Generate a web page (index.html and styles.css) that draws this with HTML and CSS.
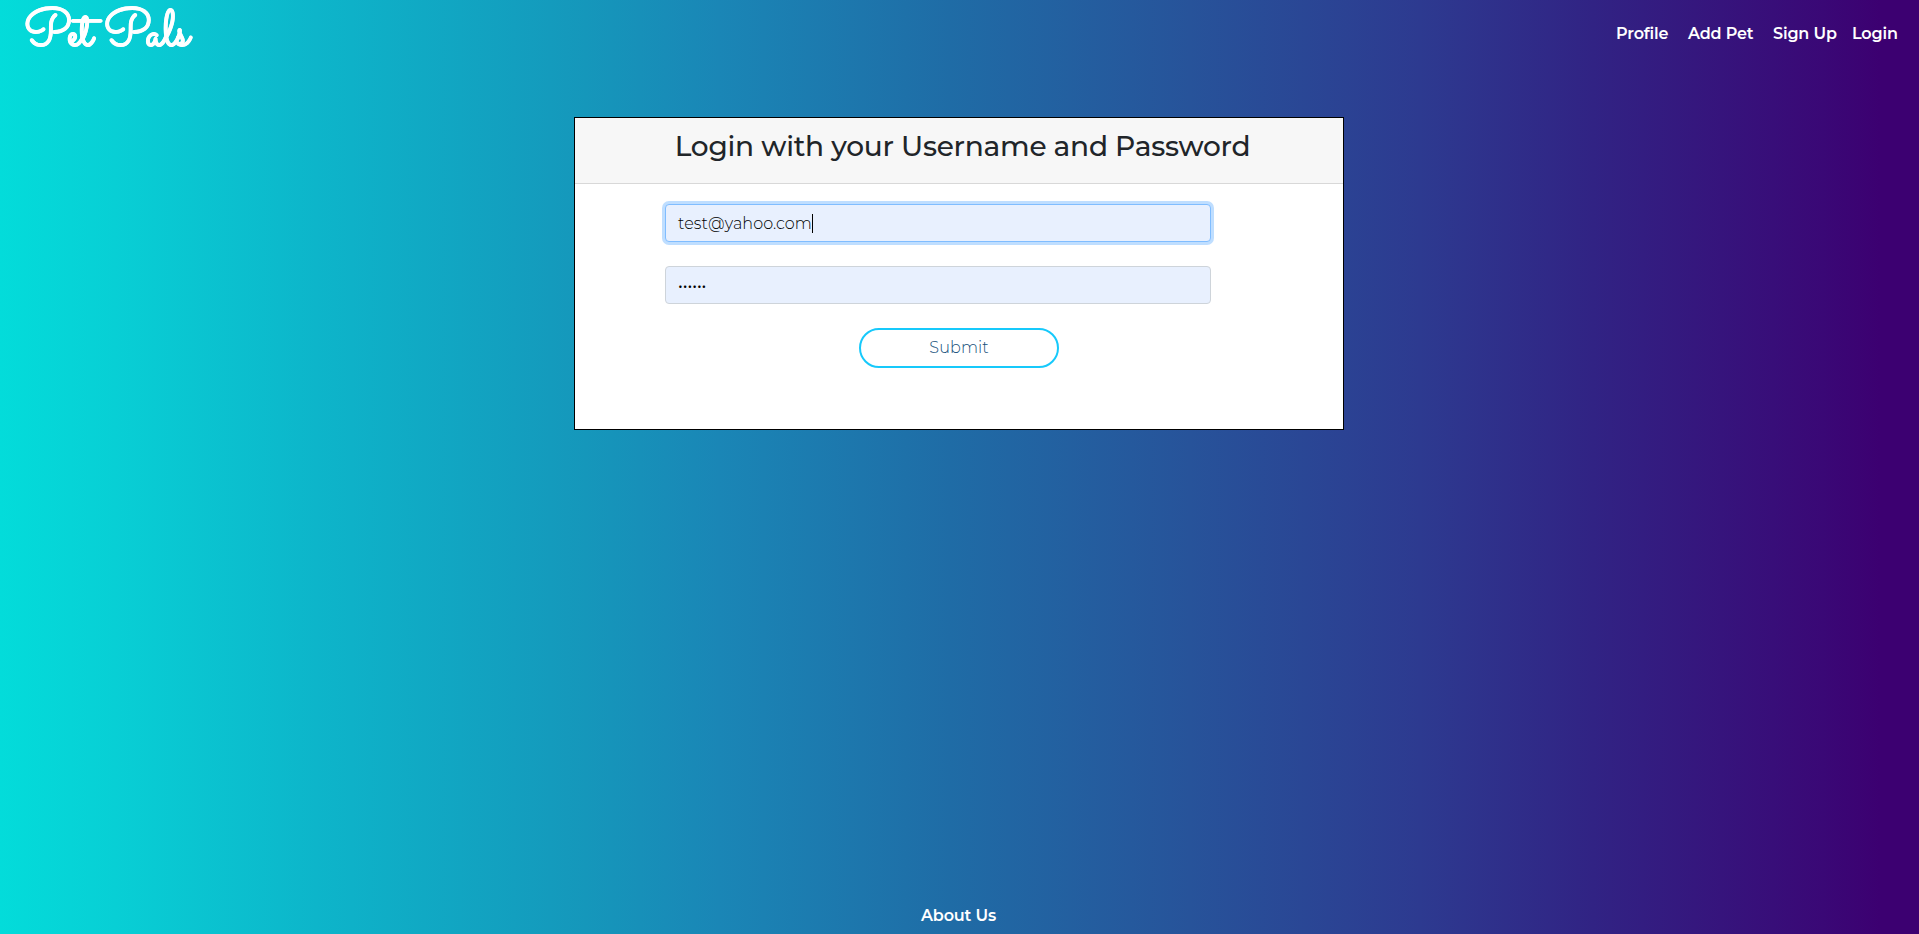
FILE: index.html
```html
<!DOCTYPE html>
<html lang="en">
<head>
<meta charset="utf-8">
<title>Pet Pals</title>
<link rel="stylesheet" href="styles.css">
</head>
<body>
<header class="navbar">
  <a class="brand">Pet Pals</a>
  <nav class="links">
    <a class="link profile">Profile</a>
    <a class="link add-pet">Add Pet</a>
    <a class="link sign-up">Sign Up</a>
    <a class="link login">Login</a>
  </nav>
</header>
<main class="card">
  <h1 class="card-header"><span>Login with your Username and Password</span></h1>
  <form class="card-body">
    <div class="field focused"><span class="email">test@yahoo.com</span><span class="caret"></span></div>
    <div class="field"><span class="password">••••••</span></div>
    <button class="submit" type="button">Submit</button>
  </form>
</main>
<footer class="footer"><a class="link about">About Us</a></footer>
</body>
</html>
```
FILE: styles.css
```css
* { box-sizing: border-box; }
body {
  margin: 0;
  height: 934px;
  display: flex;
  flex-direction: column;
  align-items: center;
  font-family: Montserrat, Inter, sans-serif;
  background: linear-gradient(90deg, #03dcda 0%, #08cfd5 6%, #0db5ca 16.5%, #1597bb 30.5%, #1a86b6 37.5%, #1f6ca6 49.5%, #27539a 62%, #2d3a90 74%, #312384 83%, #3a0876 95%, #3c0071 98%, #3c0071 100%);
}
.navbar {
  width: 100%;
  height: 66px;
  padding: 0 21px 0 24px;
  display: flex;
  justify-content: space-between;
  align-items: flex-start;
  color: #fff;
}
.brand {
  font: 700 50px/70px "Sacramento", "Liberation Serif", cursive;
  letter-spacing: 0.2px;
  -webkit-text-stroke: 0.5px #fff;
  white-space: nowrap;
}
.links { display: flex; margin-top: 22px; }
.link {
  color: #fff;
  font-size: 16px;
  font-weight: 600;
  line-height: 24px;
  white-space: nowrap;
  letter-spacing: -0.15px;
}
.profile { width: 72px; }
.add-pet { width: 85px; }
.sign-up { width: 79px; }
.login { width: 46px; }
.card {
  width: 770px;
  height: 313px;
  margin: 51px 1px 0 0;
  border: 1px solid #000;
  background: #fff;
}
.card-header {
  margin: 0;
  height: 66px;
  padding: 11px 0 0 7px;
  background: #f7f7f7;
  border-bottom: 1px solid #d8d8d8;
  color: #212529;
  font-size: 28px;
  font-weight: 500;
  line-height: 34px;
  text-align: center;
  white-space: nowrap;
  letter-spacing: -0.23px;
}
.card-body {
  display: flex;
  flex-direction: column;
  align-items: flex-start;
  gap: 24px;
  padding: 20px 90px;
}
.field {
  width: 546px;
  height: 38px;
  padding: 0 12px;
  display: flex;
  align-items: center;
  border: 1px solid #ced4da;
  border-radius: 4px;
  background: #e8f0fe;
  color: #000;
  font-size: 16px;
  font-weight: 300;
}
.focused {
  border-color: #80bdff;
  box-shadow: 0 0 0 3px #bfdeff;
}
.email { letter-spacing: 0.1px; }
.caret { width: 1px; height: 19px; background: #000; }
.password { font-size: 16px; font-weight: 400; line-height: 20px; padding-top: 1px; }
.submit {
  align-self: center;
  width: 200px;
  height: 40px;
  padding: 0 0 1px;
  border: 2px solid #17c9fb;
  border-radius: 20px;
  background: #fff;
  color: #15507c;
  font-family: inherit;
  font-size: 16px;
  font-weight: 300;
  letter-spacing: 0.15px;
}
.footer { margin: auto 2px 0 0; padding-bottom: 6px; }
```
